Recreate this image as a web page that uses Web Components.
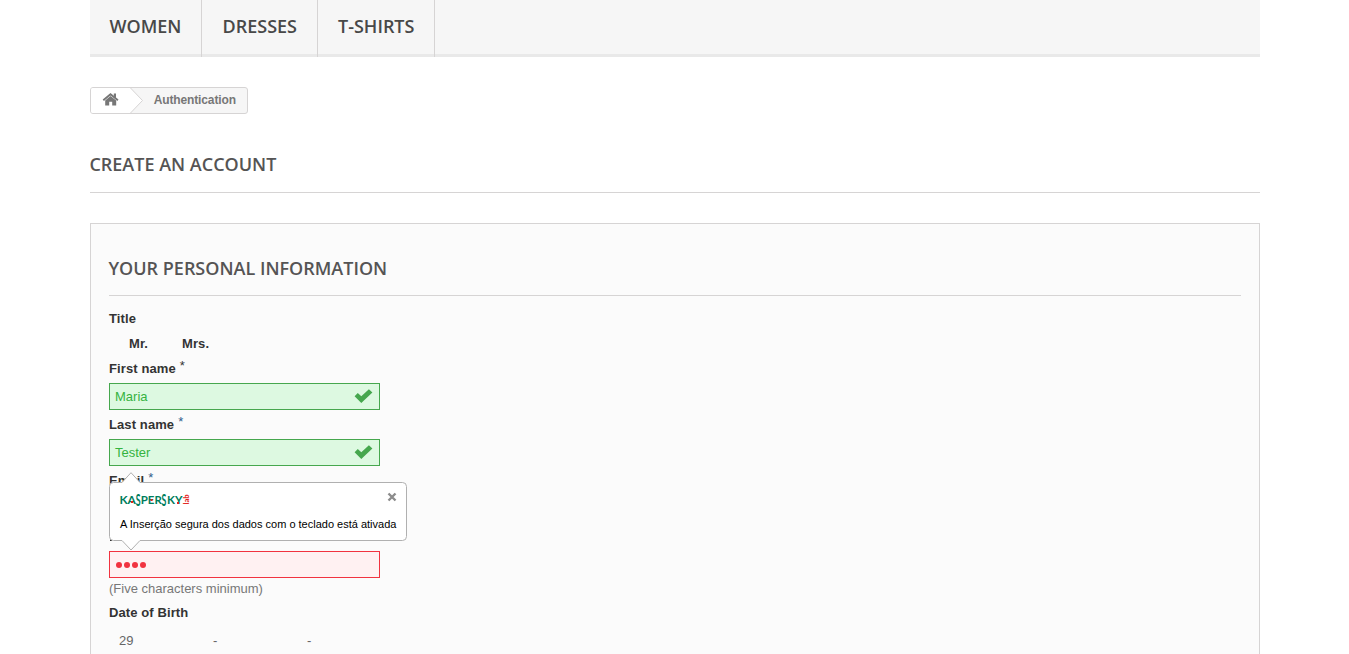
<!DOCTYPE html>
<html lang="en"><head><meta charset="utf-8"><title>Create an account</title>
<style>
html,body{margin:0;height:654px;overflow:hidden;background:#fff}
body{font:13px/18px "Liberation Sans",Arial,sans-serif;color:#777}
</style></head><body>
<shop-page></shop-page>
<script>
const define=(name,html,setup)=>customElements.define(name,class extends HTMLElement{
  connectedCallback(){
    if(this.shadowRoot)return;
    const r=this.attachShadow({mode:'open'});
    r.innerHTML=html;
    if(setup)setup(this,r);
  }
});

define('nav-item',`<style>
:host{display:block;box-sizing:border-box;height:57px;padding:15px 0 0 20px;border-right:1px solid #d6d4d4;font:600 18px/22px "Open Sans",sans-serif;color:#484848;white-space:nowrap}
</style><slot></slot>`);

define('nav-bar',`<style>
:host{display:flex;height:57px;background:linear-gradient(#f6f6f6 54px,#e9e9e9 54px)}
</style><slot></slot>`);

define('bread-crumb',`<style>
:host{display:flex;box-sizing:border-box;width:158px;height:27px;margin-top:30px;border:1px solid #d6d4d4;border-radius:3px;background:#f6f6f6;overflow:hidden;font:bold 12px/24px "Liberation Sans",Arial,sans-serif;letter-spacing:-.13px;color:#777}
svg{display:block;width:53px;height:25px;flex:none}
span{margin-left:9.700px;white-space:nowrap}
</style>
<svg viewBox="0 0 53 25"><path d="M0 0H39.500L51.500 12.500L39.500 25H0Z" fill="#fff"/><path d="M39.500 0L51.500 12.500L39.500 25" fill="none" stroke="#d6d4d4"/>
<path d="M19.500 8L25.200 12.600V17.500H21.200V13.700H18.200V17.500H14.200V12.600Z" fill="#777"/><path d="M12.300 12.300L19.500 6.200L26.900 12.300" fill="none" stroke="#777" stroke-width="1.900"/><path d="M22.800 5.500H25V10.500L22.800 8.800Z" fill="#777"/></svg>
<span><slot></slot></span>`);

define('section-heading',`<style>
:host{display:block;box-sizing:border-box;font:600 18px/22px "Open Sans",sans-serif;color:#555454;border-bottom:1px solid #d6d4d4;white-space:nowrap;text-indent:-.6px}
</style><slot></slot>`);

define('field-label',`<style>
:host{display:block;height:18px;font:bold 13px/18px "Liberation Sans",Arial,sans-serif;letter-spacing:.1px;color:#333;white-space:nowrap}
sup{font:13px/0 "Liberation Sans",Arial,sans-serif;color:#333;position:relative;top:-3px;vertical-align:baseline;margin-left:4px}
:host([blue]) sup{color:#2f5d8c}
</style><slot></slot><sup hidden>*</sup>`,(h,r)=>{r.querySelector('sup').hidden=!h.hasAttribute('required')});

define('form-field',`<style>
:host{display:flex;align-items:center;justify-content:space-between;box-sizing:border-box;width:271px;height:27px;padding:0 6px 0 5px;border:1px solid #46a74e;background:#ddf9e1;color:#35b33f;font:13px/25px "Liberation Sans",Arial,sans-serif}
:host([error]){border-color:#f13340;background:#fff1f2;color:#f13340}
:host([error]) svg{display:none}
svg{width:19px;height:14px;margin-bottom:1px}
</style><slot></slot><svg viewBox="0 0 19 14"><path d="M.6 7.300L3.800 4L7.300 7.200L14.900 .2L18.400 3.600L7.300 14Z" fill="#46a74e"/></svg>`);

define('password-dots',`<style>:host{display:flex;gap:2px;padding:1px 0 0 1px}i{width:6px;height:6px;border-radius:50%;background:#f13340}</style><i></i><i></i><i></i><i></i>`);

define('secure-tip',`<style>
:host{display:block;position:absolute;width:298px;height:79px;color:#000}
.shape{position:absolute;left:0;top:0}
.body{position:relative;padding:20px 10px 0 11px}
.top{display:flex;justify-content:space-between;height:24px}
.logo,.close{display:block}
.logo{overflow:visible}
p{margin:0;font:11px/16px "Liberation Sans",Arial,sans-serif;white-space:nowrap}
</style>
<svg class="shape" width="298" height="79" viewBox="0 0 298 79"><path d="M4.500 10.500H13L22 .700L31 10.500H293.500Q297.500 10.500 297.500 14.500V64.500Q297.500 68.500 293.500 68.500H31L22 78L13 68.500H4.500Q.5 68.500 .5 64.500V14.500Q.5 10.500 4.500 10.500Z" fill="#fff" stroke="#b0b0b0"/></svg>
<div class="body"><div class="top">
<svg class="logo" width="74" height="18" viewBox="0 0 74 18" font-family="Lato,sans-serif" font-size="12" font-weight="700" fill="#007d5c">
<text x="-.6" y="12" textLength="16.500" lengthAdjust="spacingAndGlyphs">KA</text>
<text transform="translate(15.800 13.700) scale(.5 1)" font-size="17.500">S</text>
<text x="20.800" y="12" textLength="21" lengthAdjust="spacingAndGlyphs">PER</text>
<text transform="translate(41.600 13.700) scale(.5 1)" font-size="17.500">S</text>
<text x="47" y="12" textLength="15.500" lengthAdjust="spacingAndGlyphs">KY</text>
<path d="M11 9h2v2h-2zM30.500 7h2v2h-2zM57 10h2v2h-2z" fill="#e2231a"/>
<text transform="translate(69 12.500) rotate(-90)" font-size="7.500" textLength="10" lengthAdjust="spacingAndGlyphs" fill="#e2231a">lab</text></svg>
<svg class="close" width="10" height="10" viewBox="0 0 10 10"><path d="M1.500 1.500L8.500 8.500M8.500 1.500L1.500 8.500" stroke="#8c8c8c" stroke-width="2.400"/></svg>
</div><p><slot></slot></p></div>`);

define('shop-page',`<style>
:host{display:block;width:1170px;height:654px;margin-left:90px;overflow:hidden}
nav-item:nth-child(1){width:112px;padding-left:19.500px}
nav-item:nth-child(2){width:116px;padding-left:20.500px}
nav-item:nth-child(3){width:117px}
.h1{height:40px;margin-top:39px}
.box{position:relative;box-sizing:border-box;height:440px;margin-top:30px;padding:33px 18px 0;border:1px solid #d6d4d4;background:#fbfbfb}
.h2{height:39px;margin-bottom:14px}
.titles{display:flex;height:18px;margin:7px 0 7px 20px}
.titles field-label:first-child{width:53px}
form-field{margin:5px 0 6px}
.email{height:56px}
.pw{height:18px;background:linear-gradient(#333,#333) 1px 11px/2px 2px no-repeat}
.hint{height:18px;margin:-4px 0 6px;white-space:nowrap}
.date{display:flex;padding:10px 0 0 10px;color:#666}
.date span{width:94px}
secure-tip{left:18px;top:248px}
</style>
<nav-bar><nav-item>WOMEN</nav-item><nav-item>DRESSES</nav-item><nav-item>T-SHIRTS</nav-item></nav-bar>
<bread-crumb>Authentication</bread-crumb>
<section-heading class="h1">CREATE AN ACCOUNT</section-heading>
<div class="box">
<section-heading class="h2">YOUR PERSONAL INFORMATION</section-heading>
<field-label>Title</field-label>
<div class="titles"><field-label>Mr.</field-label><field-label>Mrs.</field-label></div>
<field-label required>First name</field-label><form-field>Maria</form-field>
<field-label required blue>Last name</field-label><form-field>Tester</form-field>
<div class="email"><field-label required blue>Email</field-label></div>
<div class="pw"></div>
<form-field error><password-dots></password-dots></form-field>
<div class="hint">(Five characters minimum)</div>
<field-label>Date of Birth</field-label>
<div class="date"><span>29</span><span>-</span><span>-</span></div>
<secure-tip>A Inserção segura dos dados com o teclado está ativada</secure-tip>
</div>`);
</script></body></html>
